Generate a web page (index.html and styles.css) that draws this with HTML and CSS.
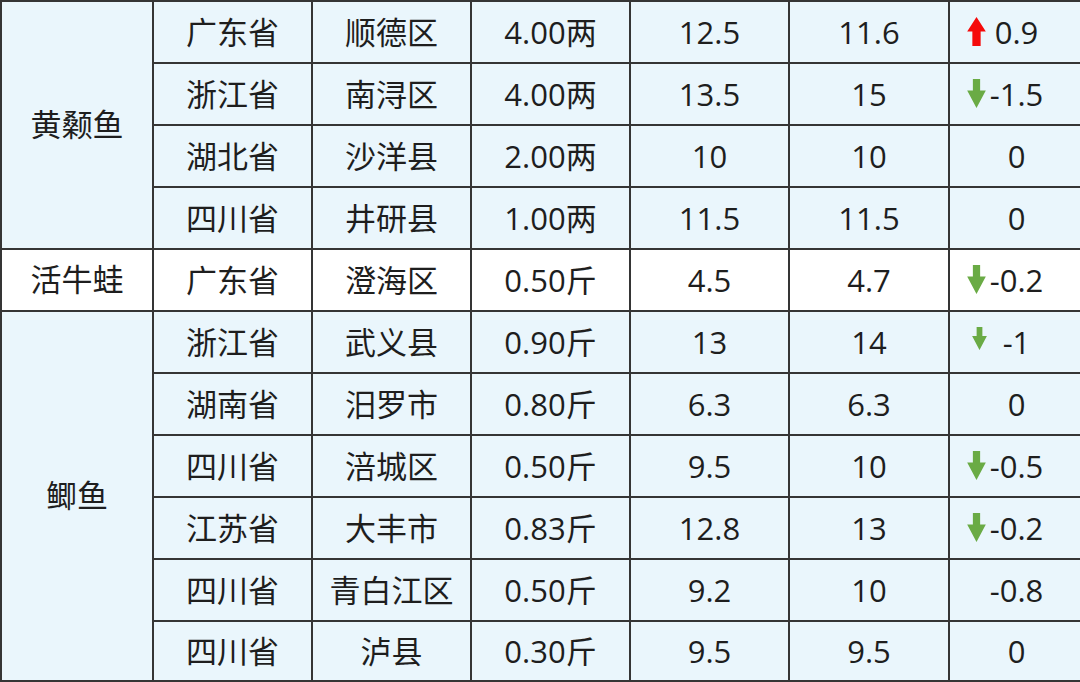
FILE: index.html
```html
<!DOCTYPE html>
<html lang="zh">
<head>
<meta charset="utf-8">
<title>价格表</title>
<link rel="stylesheet" href="styles.css">
</head>
<body>
<table class="price-table">
  <colgroup>
    <col class="c-kind"><col class="c-prov"><col class="c-area"><col class="c-spec"><col class="c-now"><col class="c-prev"><col class="c-diff">
  </colgroup>
  <tbody>
    <tr>
      <td class="kind" rowspan="4">黄颡鱼</td>
      <td>广东省</td><td>顺德区</td><td>4.00两</td><td>12.5</td><td>11.6</td>
      <td class="diff"><svg class="arrow up" viewBox="0 0 18 28"><path d="M9 0 L18 14 L13 14 L13 28 L5 28 L5 14 L0 14 Z"/></svg>0.9</td>
    </tr>
    <tr>
      <td>浙江省</td><td>南浔区</td><td>4.00两</td><td>13.5</td><td>15</td>
      <td class="diff"><svg class="arrow down" viewBox="0 0 18 28"><path d="M5.5 0 L12.5 0 L12.5 11 L18 11 L9 28 L0 11 L5.5 11 Z"/></svg>-1.5</td>
    </tr>
    <tr>
      <td>湖北省</td><td>沙洋县</td><td>2.00两</td><td>10</td><td>10</td><td class="diff">0</td>
    </tr>
    <tr>
      <td>四川省</td><td>井研县</td><td>1.00两</td><td>11.5</td><td>11.5</td><td class="diff">0</td>
    </tr>
    <tr class="plain">
      <td class="kind">活牛蛙</td>
      <td>广东省</td><td>澄海区</td><td>0.50斤</td><td>4.5</td><td>4.7</td>
      <td class="diff"><svg class="arrow down" viewBox="0 0 18 28"><path d="M5.5 0 L12.5 0 L12.5 11 L18 11 L9 28 L0 11 L5.5 11 Z"/></svg>-0.2</td>
    </tr>
    <tr>
      <td class="kind" rowspan="6">鲫鱼</td>
      <td>浙江省</td><td>武义县</td><td>0.90斤</td><td>13</td><td>14</td>
      <td class="diff"><svg class="arrow down small" viewBox="0 0 18 28"><path d="M5.5 0 L12.5 0 L12.5 11 L18 11 L9 28 L0 11 L5.5 11 Z"/></svg>-1</td>
    </tr>
    <tr>
      <td>湖南省</td><td>汨罗市</td><td>0.80斤</td><td>6.3</td><td>6.3</td><td class="diff">0</td>
    </tr>
    <tr>
      <td>四川省</td><td>涪城区</td><td>0.50斤</td><td>9.5</td><td>10</td>
      <td class="diff"><svg class="arrow down" viewBox="0 0 18 28"><path d="M5.5 0 L12.5 0 L12.5 11 L18 11 L9 28 L0 11 L5.5 11 Z"/></svg>-0.5</td>
    </tr>
    <tr>
      <td>江苏省</td><td>大丰市</td><td>0.83斤</td><td>12.8</td><td>13</td>
      <td class="diff"><svg class="arrow down" viewBox="0 0 18 28"><path d="M5.5 0 L12.5 0 L12.5 11 L18 11 L9 28 L0 11 L5.5 11 Z"/></svg>-0.2</td>
    </tr>
    <tr>
      <td>四川省</td><td>青白江区</td><td>0.50斤</td><td>9.2</td><td>10</td><td class="diff">-0.8</td>
    </tr>
    <tr class="last">
      <td>四川省</td><td>泸县</td><td>0.30斤</td><td>9.5</td><td>9.5</td><td class="diff">0</td>
    </tr>
  </tbody>
</table>
</body>
</html>
```

FILE: styles.css
```css
html, body {
  margin: 0;
  padding: 0;
  background: #ffffff;
  overflow: hidden;
}

.price-table {
  border-collapse: collapse;
  table-layout: fixed;
  width: 1083px;
  font-family: "Open Sans", "Noto Sans CJK SC", sans-serif;
  font-size: 31px;
  color: #1e1e1e;
  background: #eaf6fc;
}

.c-kind { width: 152px; }
.c-prov { width: 159px; }
.c-area { width: 159px; }
.c-spec { width: 159px; }
.c-now  { width: 159px; }
.c-prev { width: 160px; }
.c-diff { width: 135px; }

.price-table tr {
  height: 62px;
}

.price-table tr.last {
  height: 60px;
}

.price-table td {
  border: 2px solid #353535;
  padding: 0;
  text-align: center;
  vertical-align: middle;
  line-height: 1;
  white-space: nowrap;
}

.price-table tr.plain td {
  background: #ffffff;
}

.price-table td.kind {
  padding-bottom: 2px;
}

.price-table td.diff {
  position: relative;
}

.arrow {
  position: absolute;
  left: 17px;
  top: 50%;
  width: 19px;
  height: 29px;
  margin-top: -15px;
}

.arrow.up path {
  fill: #f50a0a;
}

.arrow.down path {
  fill: #6aab45;
}

.arrow.small {
  left: 21px;
  width: 17px;
  height: 23px;
  margin-top: -15px;
}
```
